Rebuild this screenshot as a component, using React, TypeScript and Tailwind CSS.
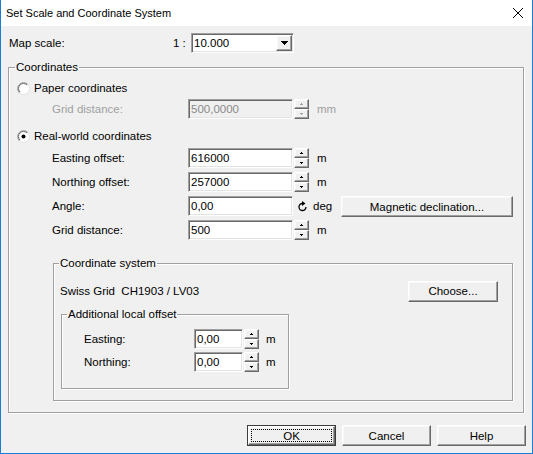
import React from "react";

const raised =
  "bg-[#f0f0f0] border border-t-white border-l-white border-r-[#696969] border-b-[#696969] shadow-[inset_-1px_-1px_0_#a0a0a0,inset_1px_1px_0_#f8f8f8]";
const sunken =
  "border border-t-[#a0a0a0] border-l-[#a0a0a0] border-r-white border-b-white shadow-[inset_1px_1px_0_#696969,inset_-1px_-1px_0_#e3e3e3]";
const etched = "border border-[#a0a0a0] shadow-[1px_1px_0_white,inset_1px_1px_0_white]";

function Spin({ disabled }: { disabled?: boolean }) {
  const c = disabled ? "#a0a0a0" : "#000";
  return (
    <div className="ml-[1px] flex h-[20px] w-[15px] flex-col">
      <div className={raised + " flex h-[10px] items-center justify-center"}>
        <svg width="3" height="2" shapeRendering="crispEdges">
          <path d="M1 0h1v1h1v1H0V1h1z" fill={c} />
        </svg>
      </div>
      <div className={raised + " flex h-[10px] items-center justify-center"}>
        <svg width="3" height="2" shapeRendering="crispEdges">
          <path d="M0 0h3v1H2v1H1V1H0z" fill={c} />
        </svg>
      </div>
    </div>
  );
}

function Field({ value, w, disabled }: { value: string; w: string; disabled?: boolean }) {
  return (
    <div
      className={
        sunken +
        " flex h-[20px] items-center pl-[2px] " +
        w +
        (disabled ? " bg-[#f0f0f0] text-[#8a8a8a]" : " bg-white")
      }
    >
      {value}
    </div>
  );
}

function Radio({ checked, label }: { checked?: boolean; label: string }) {
  return (
    <div className="flex h-[16px] items-center pl-[8px]">
      <svg width="13" height="13" viewBox="0 0 13 13">
        <circle cx="6.5" cy="6.5" r="6" fill="white" stroke="#e3e3e3" />
        <path d="M2.26 10.74A6 6 0 0 1 10.74 2.26" fill="none" stroke="#a0a0a0" />
        <path d="M2.96 10.04A5 5 0 0 1 10.04 2.96" fill="none" stroke="#696969" />
        {checked && <circle cx="6.5" cy="6.5" r="2" fill="#000" />}
      </svg>
      <span className="ml-[4px]">{label}</span>
    </div>
  );
}

function Row({ label, value, unit, disabled }: { label: string; value: string; unit: string; disabled?: boolean }) {
  return (
    <div className="mt-[4px] flex h-[20px] items-center pl-[43px]">
      <span className={"w-[136px]" + (disabled ? " text-[#a0a0a0]" : "")}>{label}</span>
      <Field value={value} w="w-[105px]" disabled={disabled} />
      <Spin disabled={disabled} />
      <span className={"ml-[8px]" + (disabled ? " text-[#a0a0a0]" : "")}>{unit}</span>
    </div>
  );
}

function Btn({ children, w, def }: { children: React.ReactNode; w: string; def?: boolean }) {
  if (def) {
    return (
      <div className={"h-[21px] border border-[#3c3c3c] " + w}>
        <div className={raised + " flex h-full items-center justify-center p-[2px]"}>
          <div className="flex h-full w-full items-center justify-center border border-dotted border-black">
            {children}
          </div>
        </div>
      </div>
    );
  }
  return <div className={raised + " flex h-[21px] items-center justify-center " + w}>{children}</div>;
}

export default function App() {
  return (
    <div className="flex h-[454px] w-[533px] flex-col border-x border-b border-[#1a7fd4] bg-[#f0f0f0] font-['Liberation_Sans',Arial,sans-serif] text-[11.5px] leading-[14px] text-black">
      <div className="flex h-[26px] shrink-0 items-center justify-between bg-white pl-[5px] pr-[9px]">
        <span className="text-[11px]">Set Scale and Coordinate System</span>
        <svg width="10" height="10" viewBox="0 0 10 10">
          <path d="M0 0L10 10M10 0L0 10" stroke="#000" strokeWidth="1" />
        </svg>
      </div>

      <div className="flex flex-col px-[7px]">
        <div className="mt-[7px] flex h-[20px] items-center">
          <span className="w-[165px] pl-[1px]">Map scale:</span>
          <span className="w-[18px]">1 :</span>
          <div className={sunken + " flex h-[20px] w-[103px] items-center justify-between bg-white pl-[2px] pr-[1px]"}>
            <span>10.000</span>
            <div className={raised + " flex h-[16px] w-[16px] items-center justify-center"}>
              <svg width="7" height="4" shapeRendering="crispEdges">
                <path d="M0 0h7v1H6v1H5v1H4v1H3V3H2V2H1V1H0z" fill="#000" />
              </svg>
            </div>
          </div>
        </div>

        <fieldset className={etched + " mt-[7px] h-[353px] w-[516px]"}>
          <legend className="ml-[6px] px-[1px] leading-[14px]">Coordinates</legend>
          <div className="mt-[6px]">
            <Radio label="Paper coordinates" />
          </div>
          <div className="-mt-[1px]">
            <Row label="Grid distance:" value="500,0000" unit="mm" disabled />
          </div>
          <div className="mt-[9px]">
            <Radio checked label="Real-world coordinates" />
          </div>
          <Row label="Easting offset:" value="616000" unit="m" />
          <Row label="Northing offset:" value="257000" unit="m" />
          <div className="mt-[4px] flex h-[21px] items-start pl-[43px]">
            <span className="flex h-[20px] w-[136px] items-center">Angle:</span>
            <Field value="0,00" w="w-[105px]" />
            <div className="flex h-[20px] w-[48px] items-center">
              <svg className="ml-[5px]" width="10" height="11" viewBox="0 0 10 11">
                <path d="M4.5 2.5A3.5 3.5 0 1 0 8 6" fill="none" stroke="#000" strokeWidth="1.3" />
                <path d="M4 0L7.5 2.5L4 5Z" fill="#000" />
              </svg>
              <span className="ml-[5px]">deg</span>
            </div>
            <Btn w="w-[172px]">Magnetic declination...</Btn>
          </div>
          <div className="-mt-[1px]">
            <Row label="Grid distance:" value="500" unit="m" />
          </div>

          <fieldset className={etched + " ml-[44px] mt-[16px] h-[145px] w-[460px]"}>
            <legend className="ml-[5px] px-[1px] leading-[14px]">Coordinate system</legend>
            <div className="mt-[11px] flex h-[20px] items-center justify-between pl-[6px] pr-[14px]">
              <span>Swiss Grid&nbsp;&nbsp;CH1903 / LV03</span>
              <Btn w="w-[90px]">Choose...</Btn>
            </div>
            <fieldset className={etched + " ml-[7px] mt-[6px] h-[82px] w-[228px]"}>
              <legend className="ml-[5px] px-[1px] leading-[14px]">Additional local offset</legend>
              <div className="mt-[8px] flex h-[20px] items-center pl-[22px]">
                <span className="w-[110px]">Easting:</span>
                <Field value="0,00" w="w-[49px]" />
                <Spin />
                <span className="ml-[7px]">m</span>
              </div>
              <div className="mt-[3px] flex h-[20px] items-center pl-[22px]">
                <span className="w-[110px]">Northing:</span>
                <Field value="0,00" w="w-[49px]" />
                <Spin />
                <span className="ml-[7px]">m</span>
              </div>
            </fieldset>
          </fieldset>
        </fieldset>

        <div className="-mr-[1px] mt-[12px] flex justify-end gap-[6px]">
          <Btn w="w-[89px]" def>
            OK
          </Btn>
          <Btn w="w-[89px]">Cancel</Btn>
          <Btn w="w-[89px]">Help</Btn>
        </div>
      </div>
    </div>
  );
}
